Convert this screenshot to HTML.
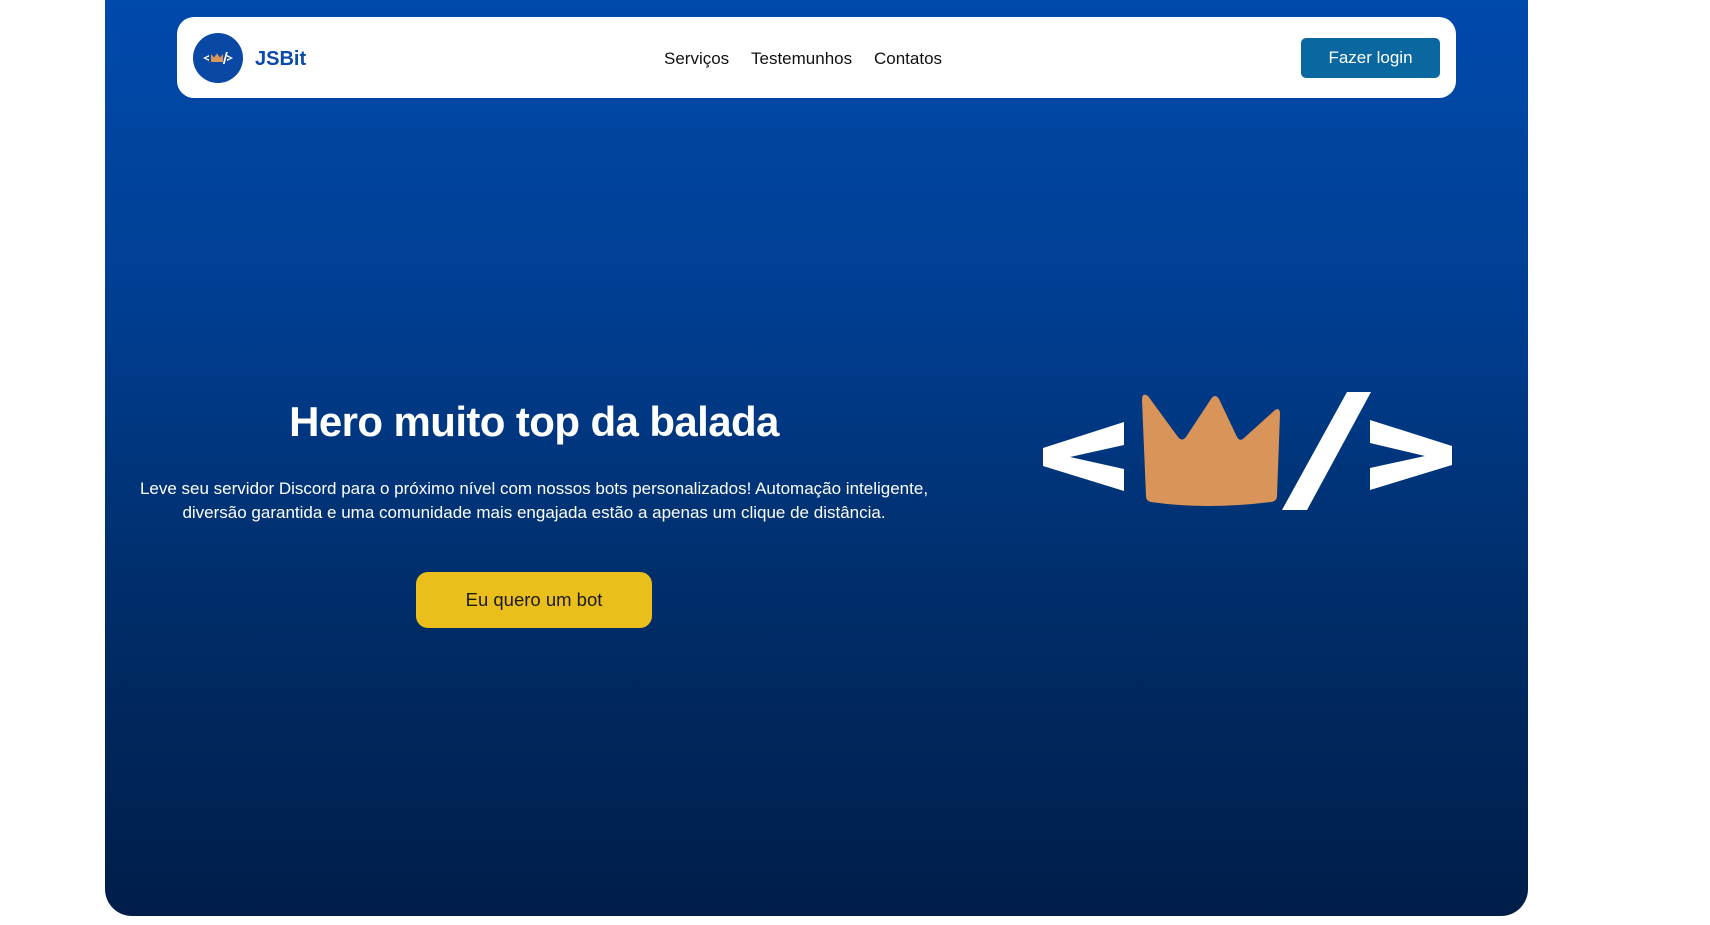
<!DOCTYPE html>
<html><head><meta charset="utf-8"><style>
*{margin:0;padding:0;box-sizing:border-box}
body{width:1710px;height:925px;background:#fff;font-family:"Liberation Sans",sans-serif;overflow:hidden;position:relative}
.card{position:absolute;left:105px;top:-30px;width:1423px;height:946px;border-radius:27px;background:linear-gradient(#004bae 0%,#003e92 35%,#002e6b 65%,#001d49 100%)}
.nav{position:absolute;left:177px;top:17px;width:1279px;height:81px;background:#fff;border-radius:17px}
.logo{position:absolute;left:193px;top:33px;width:50px;height:50px;border-radius:50%;background:#0a48a6}
.brand{position:absolute;left:255px;top:48px;font-size:20px;font-weight:bold;color:#0a4aa8}
.links{position:absolute;top:49px;font-size:17px;color:#111}
.login{position:absolute;left:1301px;top:38px;width:139px;height:40px;background:#0a67a0;border-radius:5px;color:#fff;font-size:17px;text-align:center;line-height:40px}
h1{position:absolute;left:0;width:1068px;top:398px;text-align:center;color:#fff;font-size:42px;font-weight:bold;letter-spacing:-0.6px}
p{position:absolute;left:0;width:1068px;top:477px;text-align:center;color:#fff;font-size:17px;line-height:24px}
.cta{position:absolute;left:416px;top:572px;width:236px;height:56px;background:#ebbf1b;border-radius:12px;color:#1a1a1a;font-size:18.5px;text-align:center;line-height:56px}
</style></head><body>
<div class="card"></div>
<div class="nav"></div>
<div class="logo"><svg width="50" height="50" viewBox="0 0 50 50">
<path d="M10 25l6-3v1.8l-3.6 1.2 3.6 1.2V28z" fill="#fff"/>
<path d="M18 21l3 3.5 3-4 3 4 3-3.5v8h-12z" fill="#d9945a"/>
<path d="M33 19h1.8l-3.2 12h-1.8z" fill="#fff"/>
<path d="M40 25l-6-3v1.8l3.6 1.2-3.6 1.2V28z" fill="#fff"/>
</svg></div>
<div class="brand">JSBit</div>
<div class="links" style="left:664px">Serviços</div>
<div class="links" style="left:751px">Testemunhos</div>
<div class="links" style="left:874px">Contatos</div>
<div class="login">Fazer login</div>
<h1>Hero muito top da balada</h1>
<p>Leve seu servidor Discord para o próximo nível com nossos bots personalizados! Automação inteligente,<br>diversão garantida e uma comunidade mais engajada estão a apenas um clique de distância.</p>
<div class="cta">Eu quero um bot</div>
<svg style="position:absolute;left:0;top:0" width="1710" height="925">
<path d="M1124 422v23l-54 12 54 12v22l-81-25v-18z" fill="#fff"/>
<path d="M1142 400q0-8 6-4l30 41q4 5 8 0l25-38q4-6 8 0l18 38q3 5 7 1l31-28q5-3 5 4l-3 82q0 5-6 6q-65 8-120 0q-5-1-5-6z" fill="#d9945a"/>
<path d="M1347 392h24l-64 118h-25z" fill="#fff"/>
<path d="M1370 420v23l55 13-55 12v22l82-25v-19z" fill="#fff"/>
</svg>
</body></html>
